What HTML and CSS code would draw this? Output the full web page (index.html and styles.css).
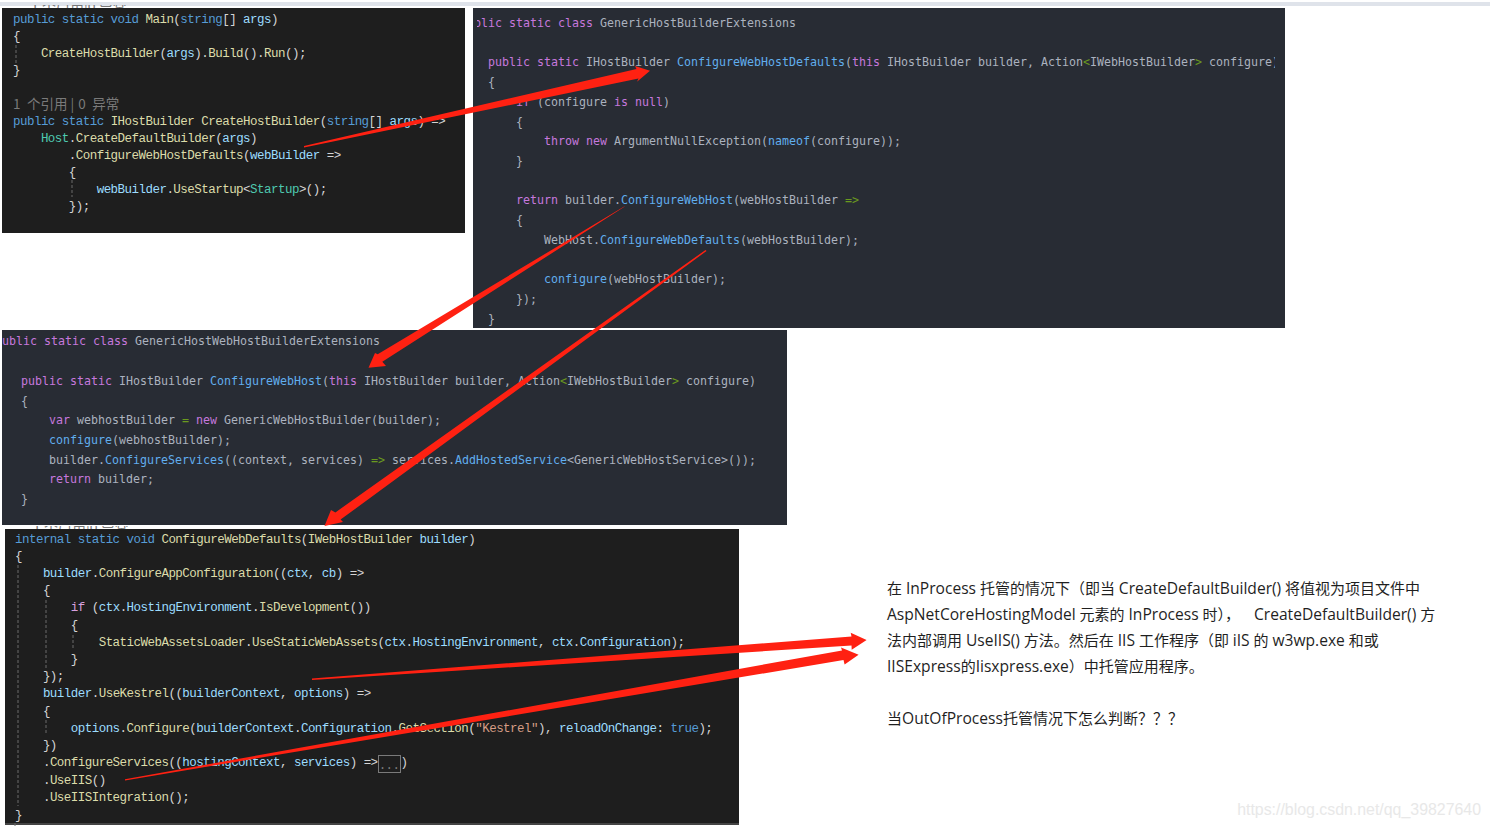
FILE: index.html
```html
<!DOCTYPE html>
<html lang="zh-CN">
<head>
<meta charset="utf-8">
<title>CreateHostBuilder</title>
<link rel="stylesheet" href="styles.css">
</head>
<body>
<main class="canvas">
  <div class="topbar"></div>

  <div class="remnant remnant-a">1 个引用|0 异常</div>
  <section class="shot vs shot-a">
<div class="l"><i class="k">public static void</i> <i class="m">Main</i><i class="p">(</i><i class="k">string</i><i class="p">[]</i> <i class="v">args</i><i class="p">)</i></div>
<div class="l"><i class="p">{</i></div>
<div class="l">    <i class="m">CreateHostBuilder</i><i class="p">(</i><i class="v">args</i><i class="p">).</i><i class="m">Build</i><i class="p">().</i><i class="m">Run</i><i class="p">();</i></div>
<div class="l"><i class="p">}</i></div>
<div class="l"> </div>
<div class="l lens">1 个引用<i class="bar">|</i>0 异常</div>
<div class="l"><i class="k">public static</i> <i class="m">IHostBuilder</i> <i class="m">CreateHostBuilder</i><i class="p">(</i><i class="k">string</i><i class="p">[]</i> <i class="v">args</i><i class="p">) =&gt;</i></div>
<div class="l">    <i class="t">Host</i><i class="p">.</i><i class="m">CreateDefaultBuilder</i><i class="p">(</i><i class="v">args</i><i class="p">)</i></div>
<div class="l">        <i class="p">.</i><i class="m">ConfigureWebHostDefaults</i><i class="p">(</i><i class="v">webBuilder</i> <i class="p">=&gt;</i></div>
<div class="l">        <i class="p">{</i></div>
<div class="l">            <i class="v">webBuilder</i><i class="p">.</i><i class="m">UseStartup</i><i class="p">&lt;</i><i class="t">Startup</i><i class="p">&gt;();</i></div>
<div class="l">        <i class="p">});</i></div>
  </section>

  <section class="shot od shot-b">
    <div class="clip">
<div class="l out-b"><i class="k">public static class</i> GenericHostBuilderExtensions</div>
<div class="l"> </div>
<div class="l in-b"><i class="k">public static</i> IHostBuilder <i class="m">ConfigureWebHostDefaults</i>(<i class="k">this</i> IHostBuilder builder, Action<i class="g">&lt;</i>IWebHostBuilder<i class="g">&gt;</i> configure)</div>
<div class="l in-b">{</div>
<div class="l in-b">    <i class="k">if</i> (configure <i class="k">is null</i>)</div>
<div class="l in-b">    {</div>
<div class="l in-b">        <i class="k">throw new</i> ArgumentNullException(<i class="m">nameof</i>(configure));</div>
<div class="l in-b">    }</div>
<div class="l"> </div>
<div class="l in-b">    <i class="k">return</i> builder.<i class="m">ConfigureWebHost</i>(webHostBuilder <i class="g">=&gt;</i></div>
<div class="l in-b">    {</div>
<div class="l in-b">        WebHost.<i class="m">ConfigureWebDefaults</i>(webHostBuilder);</div>
<div class="l"> </div>
<div class="l in-b">        <i class="m">configure</i>(webHostBuilder);</div>
<div class="l in-b">    });</div>
<div class="l in-b">}</div>
    </div>
  </section>

  <section class="shot od shot-c">
<div class="l out-c"><i class="k">public static class</i> GenericHostWebHostBuilderExtensions</div>
<div class="l"> </div>
<div class="l in-c"><i class="k">public static</i> IHostBuilder <i class="m">ConfigureWebHost</i>(<i class="k">this</i> IHostBuilder builder, Action<i class="g">&lt;</i>IWebHostBuilder<i class="g">&gt;</i> configure)</div>
<div class="l in-c">{</div>
<div class="l in-c">    <i class="k">var</i> webhostBuilder <i class="g">=</i> <i class="k">new</i> GenericWebHostBuilder(builder);</div>
<div class="l in-c">    <i class="m">configure</i>(webhostBuilder);</div>
<div class="l in-c">    builder.<i class="m">ConfigureServices</i>((context, services) <i class="g">=&gt;</i> services.<i class="m">AddHostedService</i>&lt;GenericWebHostService&gt;());</div>
<div class="l in-c">    <i class="k">return</i> builder;</div>
<div class="l in-c">}</div>
  </section>

  <div class="remnant remnant-d">1 个引用|0 异常</div>
  <section class="shot vs shot-d">
<div class="l"><i class="k">internal static void</i> <i class="m">ConfigureWebDefaults</i><i class="p">(</i><i class="m">IWebHostBuilder</i> <i class="v">builder</i><i class="p">)</i></div>
<div class="l"><i class="p">{</i></div>
<div class="l">    <i class="v">builder</i><i class="p">.</i><i class="m">ConfigureAppConfiguration</i><i class="p">((</i><i class="v">ctx</i><i class="p">,</i> <i class="v">cb</i><i class="p">) =&gt;</i></div>
<div class="l">    <i class="p">{</i></div>
<div class="l">        <i class="c">if</i> <i class="p">(</i><i class="v">ctx</i><i class="p">.</i><i class="v">HostingEnvironment</i><i class="p">.</i><i class="m">IsDevelopment</i><i class="p">())</i></div>
<div class="l">        <i class="p">{</i></div>
<div class="l">            <i class="m">StaticWebAssetsLoader</i><i class="p">.</i><i class="m">UseStaticWebAssets</i><i class="p">(</i><i class="v">ctx</i><i class="p">.</i><i class="v">HostingEnvironment</i><i class="p">,</i> <i class="v">ctx</i><i class="p">.</i><i class="v">Configuration</i><i class="p">);</i></div>
<div class="l">        <i class="p">}</i></div>
<div class="l">    <i class="p">});</i></div>
<div class="l">    <i class="v">builder</i><i class="p">.</i><i class="m">UseKestrel</i><i class="p">((</i><i class="v">builderContext</i><i class="p">,</i> <i class="v">options</i><i class="p">) =&gt;</i></div>
<div class="l">    <i class="p">{</i></div>
<div class="l">        <i class="v">options</i><i class="p">.</i><i class="m">Configure</i><i class="p">(</i><i class="v">builderContext</i><i class="p">.</i><i class="v">Configuration</i><i class="p">.</i><i class="m">GetSection</i><i class="p">(</i><i class="s">"Kestrel"</i><i class="p">),</i> <i class="v">reloadOnChange</i><i class="p">:</i> <i class="k">true</i><i class="p">);</i></div>
<div class="l">    <i class="p">})</i></div>
<div class="l">    <i class="p">.</i><i class="m">ConfigureServices</i><i class="p">((</i><i class="v">hostingContext</i><i class="p">,</i> <i class="v">services</i><i class="p">) =&gt;</i><i class="fold">...</i><i class="p">)</i></div>
<div class="l">    <i class="p">.</i><i class="m">UseIIS</i><i class="p">()</i></div>
<div class="l">    <i class="p">.</i><i class="m">UseIISIntegration</i><i class="p">();</i></div>
<div class="l"><i class="p">}</i></div>
  </section>
  <div class="scrollbar"></div>

  <article class="note">
    <p>在 <span class="en">InProcess</span> 托管的情况下（即当 <span class="en">CreateDefaultBuilder()</span> 将值视为项目文件中</p>
    <p><span class="en">AspNetCoreHostingModel</span> 元素的 <span class="en">InProcess</span> 时）， <span class="en gap">CreateDefaultBuilder()</span> 方</p>
    <p>法内部调用 <span class="en">UseIIS()</span> 方法。然后在 <span class="en">IIS</span> 工作程序（即 <span class="en">iIS</span> 的 <span class="en">w3wp.exe</span> 和或</p>
    <p><span class="en">IISExpress</span>的<span class="en">Iisxpress.exe</span>）中托管应用程序。</p>
    <p>&nbsp;</p>
    <p>当<span class="en">OutOfProcess</span>托管情况下怎么判断？？？</p>
  </article>

  <div class="watermark">https://blog.csdn.net/qq_39827640</div>

  <svg class="overlay" width="1490" height="828" viewBox="0 0 1490 828" aria-hidden="true">
    <g class="guides">
      <path d="M16 45V63M72 180V197M18 565V806M46 600V668M46 720V735M73 635V650M15 823V828"/>
    </g>
    <g class="arrows">
      <polygon points="304,146 636.5,69 635,66 650,70.7 637,81.7 638.5,78.5 304,147.5"/>
      <polygon points="625,206 377.7,354.2 375,353 368.5,367.7 386,366 382.3,361.8 624,207"/>
      <polygon points="705.5,250 335.4,512.4 331,510 324.5,526 343,522 340.6,519.6 706.5,251"/>
      <polygon points="312,678.5 851.5,636.5 850.7,632.8 866.6,640 851.7,649.7 851.5,645.6 312,680"/>
      <polygon points="125,779.2 842,650.5 841,647.6 858.6,654.7 844.6,664.5 843.5,660 125,780.4"/>
    </g>
  </svg>
</main>
</body>
</html>
```

FILE: styles.css
```css
* { box-sizing: border-box; }
html, body { margin: 0; padding: 0; background: #fff; }
.canvas {
  position: relative;
  width: 1490px;
  height: 828px;
  overflow: hidden;
  background: #fff;
}
.topbar {
  position: absolute;
  left: 0; top: 2px;
  width: 1490px; height: 4px;
  background: #dfe3ea;
}
.shot {
  position: absolute;
  overflow: hidden;
}
.shot i { font-style: normal; }
.l { white-space: pre; }

/* Visual Studio screenshots */
.vs {
  background: #1e1e1e;
  color: #dcdcdc;
  font-family: "Liberation Mono", "Noto Sans CJK SC", monospace;
  font-size: 12.5px;
  letter-spacing: -0.53px;
}
.vs .k { color: #569cd6; }
.vs .m { color: #dcdcaa; }
.vs .t { color: #4ec9b0; }
.vs .v { color: #9cdcfe; }
.vs .p { color: #d4d4d4; }
.vs .c { color: #d8a0df; }
.vs .s { color: #d69d85; }
.vs .lens {
  margin: -2px 0 2px;
  color: #7a7a7a;
  font-family: "Noto Sans CJK SC", sans-serif;
  font-size: 13.5px;
  letter-spacing: 0;
  word-spacing: 3.5px;
}
.lens .bar { margin: 0 4px 0 3px; }
.fold {
  display: inline-block;
  width: 23px;
  height: 18px;
  border: 1px solid #7a7a7a;
  color: #7a7a7a;
  line-height: 20px;
  text-align: center;
  vertical-align: top;
}
.shot-a {
  left: 2px; top: 8px;
  width: 463px; height: 225px;
  padding: 3.5px 0 0 11px;
  line-height: 17px;
}
.shot-d {
  left: 5px; top: 529px;
  width: 734px; height: 294px;
  padding: 2.6px 0 0 10px;
  line-height: 17.2px;
}
.scrollbar {
  position: absolute;
  left: 5px; top: 823px;
  width: 734px; height: 2px;
  background: #444;
}
.remnant {
  position: absolute;
  height: 3px;
  overflow: hidden;
  color: #777;
  font-family: "Noto Sans CJK SC", sans-serif;
  font-size: 14px;
  line-height: 3px;
  white-space: pre;
}
.remnant-a { left: 31px; top: 5px; }
.remnant-d { left: 33px; top: 526px; }

/* One Dark screenshots */
.od {
  background: #282c34;
  color: #abb2bf;
  font-family: "DejaVu Sans Mono", monospace;
  font-size: 11.63px;
  line-height: 19.7px;
}
.od .k { color: #c678dd; }
.od .m { color: #61aeee; }
.od .g { color: #6a9a1f; }
.shot-b {
  left: 473px; top: 8px;
  width: 812px; height: 320px;
  padding: 6px 10px 0 4px;
}
.clip { height: 100%; overflow: hidden; }
.out-b { margin-left: -17px; }
.in-b { margin-left: 11px; }
.shot-c {
  left: 2px; top: 330px;
  width: 785px; height: 195px;
  padding-top: 2.4px;
}
.out-c { margin-left: -7px; }
.in-c { margin-left: 19px; }

/* Note on the right */
.note {
  position: absolute;
  left: 887px; top: 575px;
  color: #1f1f1f;
  font-family: "Open Sans", "Noto Sans CJK SC", sans-serif;
  font-size: 15px;
  line-height: 26px;
  white-space: nowrap;
}
.note p { margin: 0; }
.note .en { font-size: 15.6px; }
.note .gap { margin-left: 10px; }
.watermark {
  position: absolute;
  right: 9px; top: 799px;
  color: #e8e8e8;
  font-family: "Liberation Sans", sans-serif;
  font-size: 15.9px;
  line-height: 22px;
}
.overlay {
  position: absolute;
  left: 0; top: 0;
  pointer-events: none;
}
.guides path {
  fill: none;
  stroke: #6a6a6a;
  stroke-width: 1;
  stroke-dasharray: 3 2;
}
.arrows polygon { fill: #ff2112; }
```
